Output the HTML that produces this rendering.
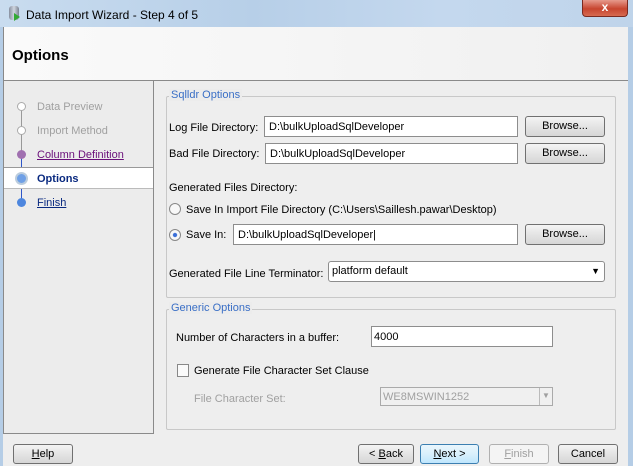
<!DOCTYPE html>
<html><head><style>
*{margin:0;padding:0;box-sizing:border-box}
body{width:633px;height:466px;overflow:hidden;position:relative;background:#eeeeee;font-family:"Liberation Sans",Tahoma,sans-serif;font-size:11px;color:#000}
.a{position:absolute}
.tb{left:0;top:0;width:633px;height:27px;background:linear-gradient(90deg,#c9dcef,#b7cfe8 40%,#c4d8ee 70%,#bfd4ea)}
.frame{left:0;top:27px;width:3px;height:439px;background:#b5cde6}
.frameR{left:628px;top:27px;width:5px;height:439px;background:#b5cde6}
.hdr{left:3px;top:27px;width:625px;height:54px;background:linear-gradient(90deg,#fafafa,#f0f0f0);border-bottom:1px solid #8a8a8a;border-left:1px solid #888}
.lp{left:3px;top:81px;width:151px;height:353px;background:#ececec;border:1px solid #8a8a8a;border-top:none}
.fs{border:1px solid #c8c8c8;border-radius:2px}
.leg{background:#ececec;color:#3a6fc6;padding:0 2px}
.tf{background:#fff;border:1px solid #8d8d8d;padding:4px 4px 0;height:21px}
.btn{border:1px solid #707070;border-radius:3px;background:linear-gradient(#f4f4f4,#e4e4e4 50%,#d6d6d6);text-align:center;line-height:19px;height:20px}
.dis{color:#a0a0a0}
.step{left:37px;font-size:11px}
</style></head><body>
<div class="a tb"></div>
<div class="a" style="left:9px;top:6px;width:10px;height:14px;background:linear-gradient(90deg,#8890a0,#d0d6e0,#7a8290);border-radius:3px"></div>
<div class="a" style="left:14px;top:13px;width:0;height:0;border-left:6px solid #3a3;border-top:4px solid transparent;border-bottom:4px solid transparent"></div>
<div class="a" style="left:26px;top:8px;font-size:12px">Data Import Wizard - Step 4 of 5</div>
<div class="a" style="left:582px;top:0;width:46px;height:17px;background:linear-gradient(#e69a8c,#c7452f 55%,#d66a50);border:1px solid #7a2a20;border-top:none;border-radius:0 0 4px 4px;color:#fff;text-align:center;font-weight:bold;font-size:12px;line-height:15px">x</div>
<div class="a frame"></div><div class="a frameR"></div>
<div class="a hdr"><div class="a" style="left:8px;top:20px;font-size:15px;font-weight:bold">Options</div></div>
<div class="a lp"></div>
<div class="a" style="left:21px;top:108px;width:1px;height:95px;background:#999"></div>
<div class="a" style="left:21px;top:155px;width:1px;height:48px;background:#2d56c8"></div>
<div class="a" style="left:4px;top:167px;width:149px;height:22px;background:#fff;border-top:1px solid #999;border-bottom:1px solid #bbb"></div>
<div class="a" style="left:17px;top:102px;width:9px;height:9px;border-radius:50%;background:#fff;border:1px solid #aaa"></div>
<div class="a" style="left:17px;top:126px;width:9px;height:9px;border-radius:50%;background:#fff;border:1px solid #aaa"></div>
<div class="a" style="left:17px;top:150px;width:9px;height:9px;border-radius:50%;background:#a070b0"></div>
<div class="a" style="left:15px;top:172px;width:13px;height:13px;border-radius:50%;background:#6fa0e6;border:2px solid #bcd"></div>
<div class="a" style="left:17px;top:198px;width:9px;height:9px;border-radius:50%;background:#4d86de"></div>
<div class="a step dis" style="top:101px">Data Preview</div>
<div class="a step dis" style="top:125px">Import Method</div>
<div class="a step" style="top:149px;color:#6a0f7a;text-decoration:underline">Column Definition</div>
<div class="a step" style="top:173px;color:#0a2a80;font-weight:bold">Options</div>
<div class="a step" style="top:197px;color:#0a2a80;text-decoration:underline">Finish</div>

<div class="a fs" style="left:166px;top:96px;width:450px;height:202px"></div>
<div class="a leg" style="left:169px;top:89px">Sqlldr Options</div>
<div class="a" style="left:169px;top:122px">Log File Directory:</div>
<div class="a tf" style="left:264px;top:116px;width:254px">D:\bulkUploadSqlDeveloper</div>
<div class="a btn" style="left:525px;top:116px;width:80px;height:21px">Browse...</div>
<div class="a" style="left:169px;top:148px">Bad File Directory:</div>
<div class="a tf" style="left:265px;top:143px;width:253px">D:\bulkUploadSqlDeveloper</div>
<div class="a btn" style="left:525px;top:143px;width:80px;height:21px">Browse...</div>
<div class="a" style="left:169px;top:182px">Generated Files Directory:</div>
<div class="a" style="left:169px;top:203px;width:12px;height:12px;border-radius:50%;border:1px solid #888;background:#f8f8f8"></div>
<div class="a" style="left:186px;top:204px">Save In Import File Directory (C:\Users\Saillesh.pawar\Desktop)</div>
<div class="a" style="left:169px;top:229px;width:12px;height:12px;border-radius:50%;border:1px solid #888;background:radial-gradient(#3a6fd8 25%,#f8f8f8 35%)"></div>
<div class="a" style="left:186px;top:229px">Save In:</div>
<div class="a tf" style="left:233px;top:224px;width:285px">D:\bulkUploadSqlDeveloper|</div>
<div class="a btn" style="left:525px;top:224px;width:80px;height:21px">Browse...</div>
<div class="a" style="left:169px;top:268px">Generated File Line Terminator:</div>
<div class="a btn" style="left:328px;top:261px;width:277px;height:21px;text-align:left;padding-left:3px;background:#fff;border-color:#8d8d8d">platform default<span style="position:absolute;right:4px;top:0;font-size:9px">▼</span></div>

<div class="a fs" style="left:166px;top:309px;width:450px;height:121px"></div>
<div class="a leg" style="left:169px;top:302px">Generic Options</div>
<div class="a" style="left:176px;top:332px">Number of Characters in a buffer:</div>
<div class="a tf" style="left:371px;top:326px;width:182px;padding-left:2px">4000</div>
<div class="a" style="left:177px;top:364px;width:12px;height:13px;border:1px solid #888;background:#fafafa"></div>
<div class="a" style="left:194px;top:365px">Generate File Character Set Clause</div>
<div class="a dis" style="left:194px;top:393px">File Character Set:</div>
<div class="a tf dis" style="left:380px;top:387px;width:173px;height:19px;background:#f0f0f0;border-color:#aaa;padding:3px 2px 0">WE8MSWIN1252<span style="position:absolute;right:0;top:0;width:13px;height:17px;border-left:1px solid #bbb;font-size:8px;text-align:center;line-height:16px">▼</span></div>

<div class="a btn" style="left:13px;top:444px;width:60px"><u>H</u>elp</div>
<div class="a btn" style="left:358px;top:444px;width:56px">&lt; <u>B</u>ack</div>
<div class="a btn" style="left:420px;top:444px;width:59px;border-color:#3c7fb1;background:linear-gradient(#eaf6fd,#d9f0fc 50%,#bee6fd)"><u>N</u>ext &gt;</div>
<div class="a btn dis" style="left:489px;top:444px;width:60px;border-color:#b0b0b0;background:#f4f4f4"><u>F</u>inish</div>
<div class="a btn" style="left:558px;top:444px;width:60px">Cancel</div>
</body></html>
